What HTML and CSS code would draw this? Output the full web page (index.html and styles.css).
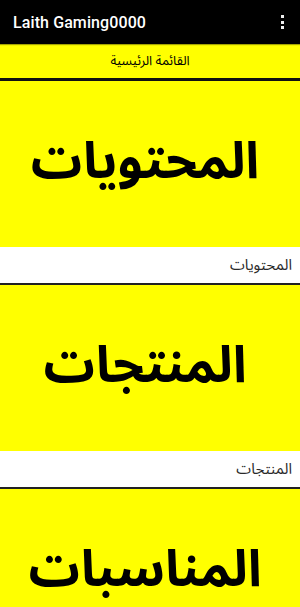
FILE: index.html
```html
<!DOCTYPE html>
<html lang="ar">
<head>
<meta charset="utf-8">
<link rel="stylesheet" href="styles.css">
</head>
<body>
<header class="appbar">
  <span class="title">Laith Gaming0000</span>
  <span class="menu"><i></i><i></i><i></i></span>
</header>
<div class="subhead" dir="rtl">القائمة الرئيسية</div>
<main class="list">
  <section class="item">
    <div class="banner" dir="rtl">المحتويات</div>
    <div class="caption" dir="rtl">المحتويات</div>
  </section>
  <section class="item">
    <div class="banner" dir="rtl">المنتجات</div>
    <div class="caption" dir="rtl">المنتجات</div>
  </section>
  <section class="item">
    <div class="banner" dir="rtl">المناسبات</div>
    <div class="caption" dir="rtl">المناسبات</div>
  </section>
</main>
</body>
</html>
```
FILE: styles.css
```css
html, body {
  margin: 0;
  padding: 0;
  background: #ffff00;
  overflow: hidden;
}
body {
  width: 300px;
  height: 607px;
  font-family: Roboto, "DejaVu Sans", sans-serif;
}
.appbar {
  height: 44px;
  background: #000;
  display: flex;
  align-items: center;
  justify-content: space-between;
  padding: 0 13px 0 13px;
  box-shadow: 0 1px 1px rgba(0,0,0,0.35);
  position: relative;
  z-index: 1;
}
.title {
  color: #fff;
  font-size: 16px;
  font-weight: 500;
  letter-spacing: 0.1px;
}
.menu {
  display: flex;
  flex-direction: column;
  gap: 2.5px;
  margin-right: 3px;
}
.menu i {
  display: block;
  width: 3px;
  height: 3px;
  background: #eee;
}
.subhead {
  display: flex;
  align-items: center;
  justify-content: center;
  font-family: "Noto Sans Arabic", "Noto Naskh Arabic", "DejaVu Sans", sans-serif;
  font-size: 13px;
  color: #000;
  border-bottom: 3px solid #111;
  box-sizing: border-box;
  height: 37px;
}
.item {
  display: flex;
  flex-direction: column;
  border-bottom: 2px solid #222;
}
.banner {
  height: 166px;
  display: flex;
  align-items: center;
  justify-content: center;
  font-family: "Noto Sans Arabic", "Noto Naskh Arabic", "DejaVu Sans", sans-serif;
  font-weight: bold;
  font-size: 51px;
  color: #000;
  background: #ffff00;
  padding: 0 10px 4px 0;
  box-sizing: border-box;
}
.caption {
  height: 36px;
  background: #fff;
  display: flex;
  align-items: center;
  padding: 0 8px;
  font-family: "Noto Sans Arabic", "Noto Naskh Arabic", "DejaVu Sans", sans-serif;
  font-size: 15px;
  color: #2a2a2a;
}
```
